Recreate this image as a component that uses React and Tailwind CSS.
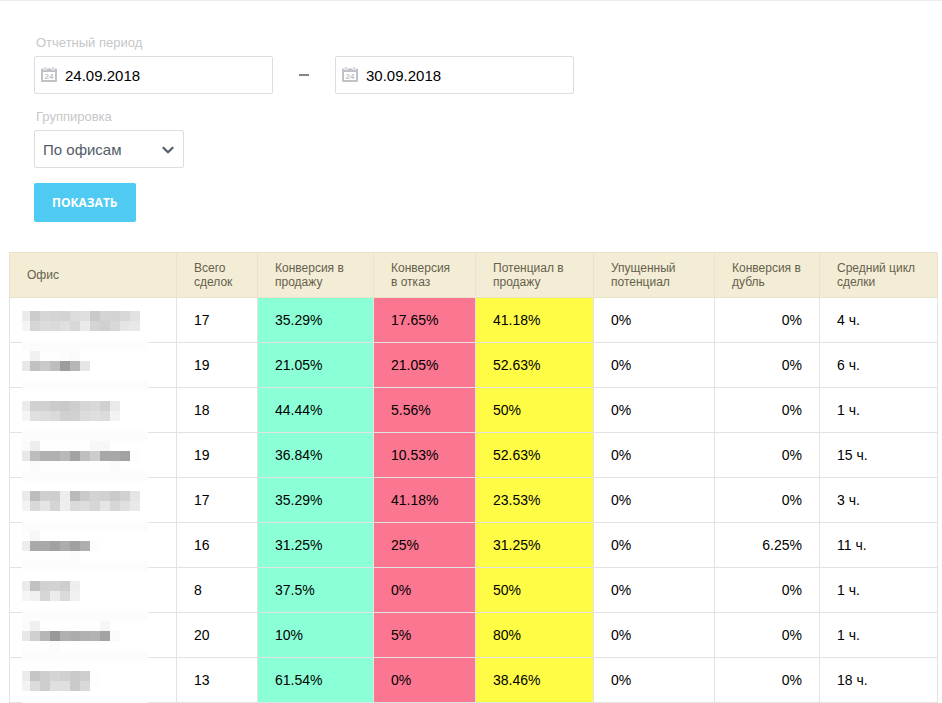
import { useState } from "react";
import clsx from "clsx";

const columns = [
    { name: "Офис", width: "w-[167px]" },
    { name: "Всего сделок", width: "w-[81px]" },
    { name: "Конверсия в продажу", width: "w-[116px]", cell: "bg-[#8bffd6]" },
    { name: "Конверсия в отказ", width: "w-[102px]", cell: "bg-[#fb7690]" },
    { name: "Потенциал в продажу", width: "w-[118px]", cell: "bg-[#fffc46]" },
    { name: "Упущенный потенциал", width: "w-[121px]" },
    { name: "Конверсия в дубль", width: "w-[105px]", cell: "text-right" },
    { name: "Средний цикл сделки", width: "w-[118px]" },
];

// mask: strips of the hidden office name, one hex grey per block
const offices = [
    {
        top: 13,
        mask: ["eb cc d6 d4 d3 dc df c9 d4 d3 d7 e2", "f5 d6 dc da df d8 ea d4 d0 d8 e5 e8"],
        values: ["17", "35.29%", "17.65%", "41.18%", "0%", "0%", "4 ч."],
    },
    {
        top: 8,
        mask: ["fe f1 fe fe fc fa", "e8 c1 ca be 9d b6 e6"],
        values: ["19", "21.05%", "21.05%", "52.63%", "0%", "0%", "6 ч."],
    },
    {
        top: 13,
        mask: ["eb d1 d1 cb c9 ce d6 d8 d0 ea", "f5 df dd da d0 d1 dc df db f3"],
        values: ["18", "44.44%", "5.56%", "50%", "0%", "0%", "1 ч."],
    },
    {
        top: 8,
        mask: ["fa ed fe fe fe fe fe f7 f7", "e8 bd b0 b0 b8 a2 bf cc a8 a8 a2 fd", "fe fa fe fe fe fe fe fe fe fa"],
        values: ["19", "36.84%", "10.53%", "52.63%", "0%", "0%", "15 ч."],
    },
    {
        top: 13,
        mask: ["ea bd cf ce ed ba ca d3 d1 ca d1 e5", "f3 d9 e5 d4 ee da dd d6 e5 d6 e0 e9"],
        values: ["17", "35.29%", "41.18%", "23.53%", "0%", "0%", "3 ч."],
    },
    {
        top: 8,
        mask: ["fe f7", "ed a9 a9 a1 ac a0 ae fd", "fe fe fe fe fe fb"],
        values: ["16", "31.25%", "25%", "31.25%", "0%", "6.25%", "11 ч."],
    },
    {
        top: 13,
        mask: ["eb c1 d1 d2 ce ee", "f5 f0 d6 ec da f1"],
        values: ["8", "37.5%", "0%", "50%", "0%", "0%", "1 ч."],
    },
    {
        top: 8,
        mask: ["fb f0 fe fe fe fe fe fe f6", "e8 d0 b6 99 b0 ac b1 b3 a3 fb", "fe fe fe fb"],
        values: ["20", "10%", "5%", "80%", "0%", "0%", "1 ч."],
    },
    {
        top: 13,
        mask: ["eb c5 ce d4 d0 ca ce fe", "f3 dc cd df df ca d9 fe"],
        values: ["13", "61.54%", "0%", "38.46%", "0%", "0%", "18 ч."],
    },
];

function HiddenName({ top, mask }) {
    return (
        <svg width="126" height="44" className="relative block overflow-visible" shapeRendering="crispEdges" aria-hidden="true">
            <rect x="0" y={top === 13 ? 43 : 38} width="126" height="10" fill="#fcfcfc" />
            {mask.map((strip, row) =>
                strip.split(" ").map((grey, i) => (
                    <rect
                        key={`${row}-${i}`}
                        x={i === 0 ? 0 : i * 10 - 2}
                        y={top + row * 10}
                        width={i === 0 ? 8 : 10}
                        height="10"
                        fill={`#${grey}${grey}${grey}`}
                    />
                ))
            )}
        </svg>
    );
}

function CalendarIcon() {
    return (
        <svg width="16" height="16" viewBox="0 0 16 16" className="shrink-0" aria-hidden="true">
            <path fill="#bfc2c7" d="M1 1.5h1.5V3h3V1.5h5V3h3V1.5H15a1 1 0 0 1 1 1V14a1 1 0 0 1-1 1H1a1 1 0 0 1-1-1V2.5a1 1 0 0 1 1-1z" />
            <path fill="#bfc2c7" d="M3.4 0h1.2v2.4H3.4zM11.4 0h1.2v2.4h-1.2z" />
            <path fill="#fff" d="M2 5h12v8H2z" />
            <text x="8" y="12" textAnchor="middle" fontSize="8" fontWeight="700" fill="#bfc2c7">24</text>
        </svg>
    );
}

function DateField({ id, label, value, onChange }) {
    return (
        <div className="flex h-[38px] w-[239px] items-center gap-2 rounded-xs border border-[#dcdde1] bg-white px-1.5">
            <CalendarIcon />
            <input
                id={id}
                type="text"
                aria-label={label}
                value={value}
                onChange={(e) => onChange(e.target.value)}
                className="min-w-0 flex-1 bg-transparent pt-0.5 text-[15px] text-black outline-none"
            />
        </div>
    );
}

export default function App() {
    const [from, setFrom] = useState("24.09.2018");
    const [to, setTo] = useState("30.09.2018");
    const [group, setGroup] = useState("office");

    return (
        <div className="overflow-hidden border-t border-[#e9eeed] bg-white font-['Liberation_Sans',Arial,sans-serif]">
            {/* Filters */}
            <form className="px-[34px] pt-8" onSubmit={(e) => e.preventDefault()}>
                <label htmlFor="date-from" className="block px-0.5 pb-1 text-[13px] leading-[19px] text-[#c5c7c9]">
                    Отчетный период
                </label>
                <div className="flex items-center">
                    <DateField id="date-from" label="Отчетный период, начало" value={from} onChange={setFrom} />
                    <div className="flex w-[62px] justify-center">
                        <span className="h-0.5 w-2.5 bg-[#858585]" />
                    </div>
                    <DateField id="date-to" label="Отчетный период, конец" value={to} onChange={setTo} />
                </div>

                <label htmlFor="group" className="mt-[13px] block px-0.5 pb-1 text-[13px] leading-[19px] text-[#c5c7c9]">
                    Группировка
                </label>
                <div className="relative w-[150px]">
                    <select
                        id="group"
                        value={group}
                        onChange={(e) => setGroup(e.target.value)}
                        className="h-[38px] w-full appearance-none rounded-xs border border-[#dcdde1] bg-white pt-0.5 pl-2 text-[15px] text-[#535c69] outline-none"
                    >
                        <option value="office">По офисам</option>
                        <option value="manager">По менеджерам</option>
                    </select>
                    <svg width="12" height="8" viewBox="0 0 12 8" className="pointer-events-none absolute top-4 right-2.5" aria-hidden="true">
                        <path d="M0.8 1.2 6 6.2l5.2-5" fill="none" stroke="#535c69" strokeWidth="2.2" />
                    </svg>
                </div>

                <button
                    type="submit"
                    className="mt-[15px] h-[39px] rounded-xs bg-[#4fcaf2] px-[18px] font-['Open_Sans',sans-serif] text-xs font-bold text-white uppercase"
                >
                    Показать
                </button>
            </form>

            {/* Report */}
            <div className="mt-[30px] pr-1 pl-[9px]">
                <table className="w-full table-fixed border-collapse">
                    <thead>
                        <tr className="h-[45px] bg-[#f4edd5]">
                            {columns.map((col) => (
                                <th
                                    key={col.name}
                                    scope="col"
                                    className={clsx(
                                        "border border-[#eae3cc] px-[17px] py-0 text-left text-xs leading-[14px] font-normal text-[#65614f]",
                                        col.width
                                    )}
                                >
                                    {col.name}
                                </th>
                            ))}
                        </tr>
                    </thead>
                    <tbody>
                        {offices.map((office, i) => (
                            <tr key={i} className="h-[45px]">
                                <td className="border border-[#e3e3e3] py-0 pr-0 pl-3">
                                    <HiddenName top={office.top} mask={office.mask} />
                                </td>
                                {office.values.map((value, j) => (
                                    <td
                                        key={j}
                                        className={clsx(
                                            "border border-[#e3e3e3] px-[17px] py-0 text-sm text-black",
                                            columns[j + 1].cell
                                        )}
                                    >
                                        {value}
                                    </td>
                                ))}
                            </tr>
                        ))}
                    </tbody>
                </table>
            </div>
        </div>
    );
}
